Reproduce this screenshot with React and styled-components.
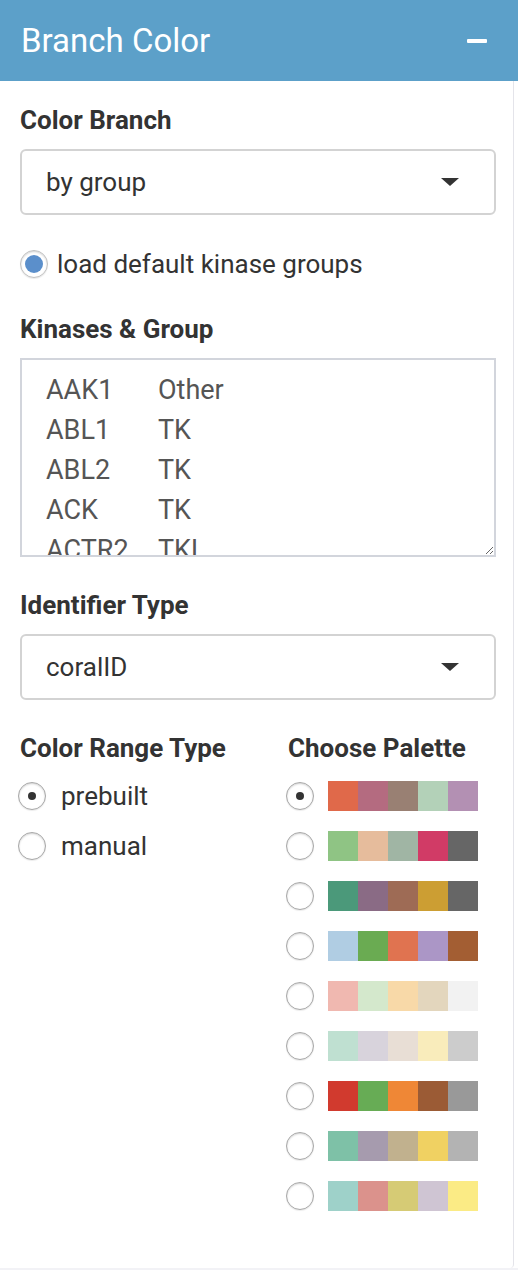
import React from 'react';
import styled, { createGlobalStyle } from 'styled-components';

const GlobalStyle = createGlobalStyle`
  html, body {
    margin: 0;
    padding: 0;
    background: #f2f2f6;
  }
  body {
    font-family: Roboto, "Liberation Sans", Arial, sans-serif;
    color: #333;
  }
`

const Panel = styled.div`
  width: 518px;
  height: 1268px;
  display: flex;
  flex-direction: column;
  background: #fff;
`

const Header = styled.div`
  height: 81px;
  flex-shrink: 0;
  background: #5ca0c9;
  display: flex;
  align-items: center;
  justify-content: space-between;
  padding: 0 31px 0 21px;
  box-sizing: border-box;
`

const Title = styled.h3`
  margin: 0;
  font-size: 33px;
  font-weight: 400;
  color: #fff;
`

const Collapse = styled.span`
  display: block;
  width: 20px;
  height: 4px;
  background: #fff;
  border-radius: 1px;
`

const Body = styled.div`
  flex: 1;
  width: 514px;
  box-sizing: border-box;
  border-right: 1px solid #e4e4ea;
  border-bottom-right-radius: 4px;
  padding: 25px 17px 0 20px;
  display: flex;
  flex-direction: column;
`

const Label = styled.div`
  font-size: 26px;
  font-weight: 700;
  line-height: 28px;
  color: #333;
  margin-top: ${p => p.gap || 0}px;
`

const SelectBox = styled.div`
  margin-top: 15px;
  height: 66px;
  box-sizing: border-box;
  border: 2px solid #d3d3d3;
  border-radius: 6px;
  display: flex;
  align-items: center;
  justify-content: space-between;
  padding: 0 35px 0 24px;
  font-size: 26px;
  color: #333;
`

const Caret = styled.span`
  width: 0;
  height: 0;
  border-left: 9px solid transparent;
  border-right: 9px solid transparent;
  border-top: 8px solid #333;
`

const Row = styled.label`
  display: flex;
  align-items: center;
  height: 30px;
  margin-top: ${p => p.gap || 0}px;
  margin-left: ${p => p.shift || 0}px;
  font-size: 26px;
  color: #333;
  gap: ${p => p.space || 11}px;
`

const Radio = styled.span`
  width: 28px;
  height: 28px;
  flex-shrink: 0;
  box-sizing: border-box;
  border-radius: 50%;
  border: 1.5px solid ${p => p.blue ? '#c2c2c2' : '#a8a8a8'};
  background: #fff;
  box-shadow: inset 0 1px 2px rgba(0, 0, 0, 0.18), 0 1px 1px rgba(0, 0, 0, 0.08);
  display: flex;
  align-items: center;
  justify-content: center;

  &::after {
    content: '';
    display: ${p => p.checked ? 'block' : 'none'};
    width: ${p => p.blue ? 18 : 8}px;
    height: ${p => p.blue ? 18 : 8}px;
    border-radius: 50%;
    background: ${p => p.blue ? '#5b8fcb' : '#333'};
  }
`

const KinaseText = styled.textarea`
  margin-top: 15px;
  height: 199px;
  width: 100%;
  box-sizing: border-box;
  border: 2px solid #d2d5dc;
  padding: 10px 20px 0 24px;
  font-family: Roboto, "Liberation Sans", Arial, sans-serif;
  font-size: 27px;
  line-height: 40px;
  color: #555;
  tab-size: 112px;
  resize: vertical;
  outline: none;
  overflow: hidden;
`

const Columns = styled.div`
  display: grid;
  grid-template-columns: 268px 1fr;
  margin-top: 34px;
`

const Column = styled.div`
  display: flex;
  flex-direction: column;
`

const Swatches = styled.span`
  display: flex;
  height: 30px;
`

const Swatch = styled.span`
  width: 30px;
  height: 30px;
  background: ${p => p.color};
`

const palettes = [
  ['#e0694a', '#b46b80', '#998073', '#b3d1b8', '#b390b3'],
  ['#8fc484', '#e6bc9c', '#a0b5a4', '#d13b66', '#666666'],
  ['#4b997a', '#8a6b85', '#9e6b55', '#cc9e33', '#666666'],
  ['#b0cde3', '#6aab52', '#e07350', '#ab96c6', '#a35e33'],
  ['#f0b8b0', '#d4e8cc', '#f8d9a8', '#e3d6bd', '#f2f2f2'],
  ['#bfe0d1', '#d8d3dc', '#e8ded5', '#f9ecbb', '#cccccc'],
  ['#d13a2e', '#67ac55', '#ef8736', '#9b5b35', '#999999'],
  ['#7ec1a7', '#a69bae', '#c1b18e', '#f0d162', '#b3b3b3'],
  ['#9ed1c9', '#db928c', '#d6cb75', '#cfc5d3', '#fbeb85'],
]

const kinases = 'AAK1\tOther\nABL1\tTK\nABL2\tTK\nACK\tTK\nACTR2\tTKL\nACTR2B\tTKL\nADCK4\tAtypical'

export default function App() {
  return (
    <>
      <GlobalStyle />
      <Panel>
        <Header>
          <Title>Branch Color</Title>
          <Collapse />
        </Header>
        <Body>
          <Label>Color Branch</Label>
          <SelectBox>by group<Caret /></SelectBox>
          <Row gap={34} space={9}>
            <Radio checked blue />load default kinase groups
          </Row>
          <Label gap={36}>Kinases &amp; Group</Label>
          <KinaseText defaultValue={kinases} spellCheck={false} />
          <Label gap={34}>Identifier Type</Label>
          <SelectBox>coralID<Caret /></SelectBox>
          <Columns>
            <Column>
              <Label>Color Range Type</Label>
              <Row gap={19} space={15} shift={-2}>
                <Radio checked />prebuilt
              </Row>
              <Row gap={20} space={15} shift={-2}>
                <Radio />manual
              </Row>
            </Column>
            <Column>
              <Label>Choose Palette</Label>
              {palettes.map((p, i) => (
                <Row key={i} gap={i === 0 ? 19 : 20} space={14} shift={-2}>
                  <Radio checked={i === 0} />
                  <Swatches>
                    {p.map((c, j) => <Swatch key={j} color={c} />)}
                  </Swatches>
                </Row>
              ))}
            </Column>
          </Columns>
        </Body>
      </Panel>
    </>
  );
}
